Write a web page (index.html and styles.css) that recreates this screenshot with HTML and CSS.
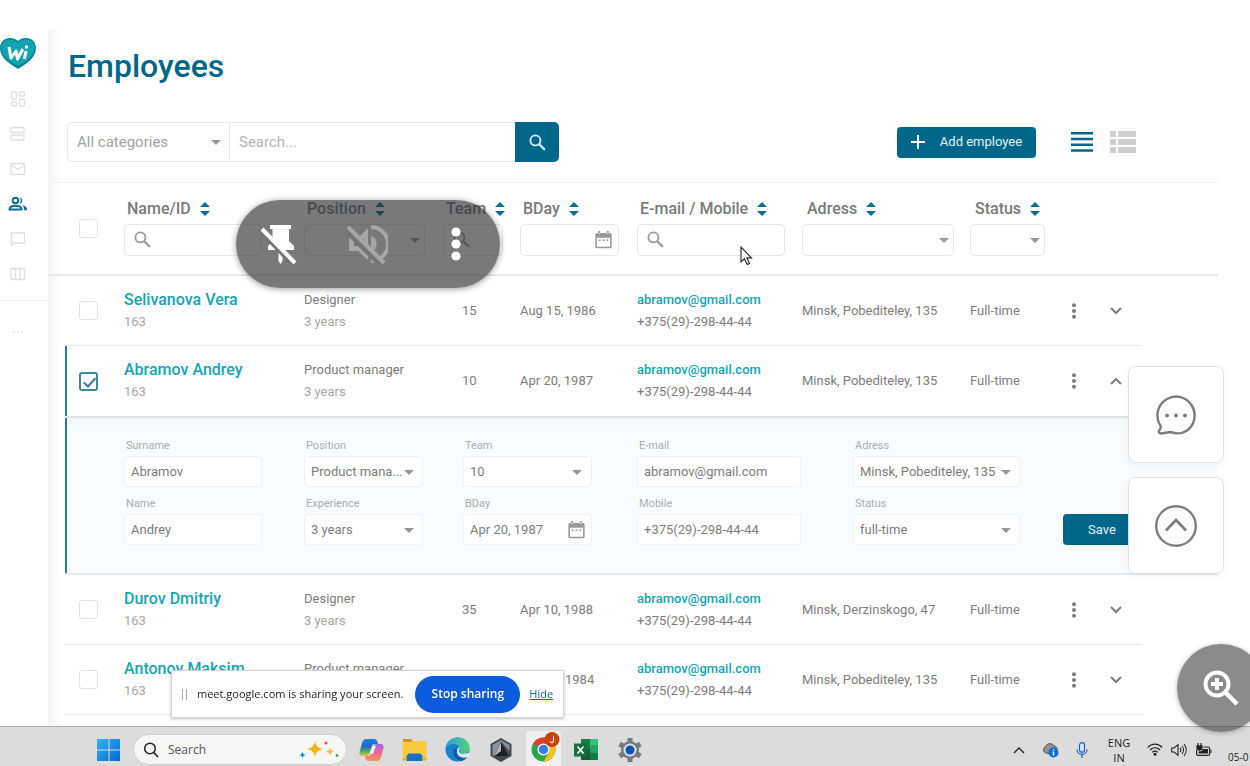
FILE: index.html
```
<!DOCTYPE html>
<html lang="en">
<head>
<meta charset="utf-8">
<title>Employees</title>
<link rel="stylesheet" href="styles.css">
</head>
<body>
<svg class="sprite" aria-hidden="true">
  <symbol id="sort" viewBox="0 0 10 14"><path d="M5 0l5 5H0zM5 14l5-5H0z"/></symbol>
  <symbol id="search" viewBox="0 0 18 18"><circle cx="6.8" cy="6.8" r="5.3" fill="none" stroke="currentColor" stroke-width="2"/><path d="M10.8 10.800l6 6" stroke="currentColor" stroke-width="2.4"/></symbol>
  <symbol id="calendar" viewBox="0 0 18 19"><path d="M2 2h14a1.600 1.600 0 0 1 1.600 1.600v13a1.600 1.600 0 0 1-1.600 1.600H2a1.600 1.600 0 0 1-1.600-1.600v-13A1.600 1.600 0 0 1 2 2zm0 5v9.600h14V7zM3.500 0h2v3h-2zm9 0h2v3h-2zM4 9h2v1.500H4zm4 0h2v1.500H8zm4 0h2v1.500h-2z" fill-rule="evenodd"/></symbol>
  <symbol id="dots" viewBox="0 0 6 16"><circle cx="3" cy="2.200" r="2"/><circle cx="3" cy="8" r="2"/><circle cx="3" cy="13.800" r="2"/></symbol>
  <symbol id="down" viewBox="0 0 12 8"><path d="M1 1l5 5 5-5" fill="none" stroke="currentColor" stroke-width="2"/></symbol>
  <symbol id="up" viewBox="0 0 12 8"><path d="M1 7l5-5 5 5" fill="none" stroke="currentColor" stroke-width="2"/></symbol>
</svg>

<div class="app">
  <nav class="sidebar" aria-label="Main">
    <svg class="logo" viewBox="0 0 36 32"><path d="M18 31C10 26 0 20 0 10 0 4 4.500 0 10 0c3.500 0 6 1 8 3 2-2 4.500-3 8-3 5.500 0 10 4 10 10 0 10-10 16-18 21z" fill="#0a8494"/><path d="M18 28C11 24 1.500 18 1.500 10 1.500 5 5 1.500 10 1.500c3.500 0 6 1.500 8 3.500 2-2 4.500-3.500 8-3.500 5 0 8.500 3.500 8.500 8.500 0 8-9.500 14-16.500 18z" fill="#12a3b2"/><path d="M9 9l2 11 5-7 1.500 8 5.500-10M24.500 21l1.500-8" fill="none" stroke="#fff" stroke-width="3" stroke-linejoin="round"/><circle cx="26.500" cy="9" r="1.700" fill="#fff"/></svg>
    <a href="#" class="nav" aria-label="Dashboard"><svg viewBox="0 0 16 16"><rect x="1.500" y="1" width="5" height="7" rx="1"/><rect x="9.500" y="1" width="5" height="4" rx="1"/><rect x="9.500" y="8" width="5" height="7" rx="1"/><rect x="1.500" y="11" width="5" height="4" rx="1"/></svg></a>
    <a href="#" class="nav" aria-label="Boards"><svg viewBox="0 0 16 16"><rect x="1" y="1.500" width="13" height="5" rx="1"/><rect x="1" y="9" width="13" height="5" rx="1"/></svg></a>
    <a href="#" class="nav" aria-label="Mail"><svg viewBox="0 0 16 16"><rect x="1" y="2.500" width="13.500" height="11" rx="1"/><path d="M1.500 4L8 8.500 14.500 4"/></svg></a>
    <a href="#" class="nav active" aria-label="Employees"><svg viewBox="0 0 20 16"><circle cx="7.500" cy="4.500" r="2.800"/><path d="M1.500 13.500c0-2.500 3-3.700 6-3.700s6 1.200 6 3.700z"/><path d="M11.500 1.200a3.500 3.500 0 0 1 0 6.800 6 6 0 0 0 0-6.800zM14 9.200c3 .4 5 1.800 5 3.800v1.200h-3V13c0-1.500-.8-2.800-2-3.800z" class="solid"/></svg></a>
    <a href="#" class="nav" aria-label="Chat"><svg viewBox="0 0 16 16"><path d="M1.500 2h13v10H4l-2.500 2.500z"/></svg></a>
    <a href="#" class="nav" aria-label="Columns"><svg viewBox="0 0 16 16"><rect x="1" y="2.500" width="13.500" height="11" rx="1"/><path d="M5.500 2.500v11M10 2.500v11"/></svg></a>
    <div class="divider"></div>
    <a href="#" class="nav more" aria-label="More"><svg viewBox="0 0 16 16"><path d="M3 8h2M7 8h2M11 8h2"/></svg></a>
  </nav>

  <main class="main">
    <h1>Employees</h1>
    <div class="toolbar">
      <form class="search">
        <span class="pick"><select aria-label="Category"><option>All categories</option></select></span>
        <input type="text" placeholder="Search..." aria-label="Search">
        <button type="button" aria-label="Search"><svg class="i18"><use href="#search"/></svg></button>
      </form>
      <div class="actions">
        <button type="button" class="btn add"><svg viewBox="0 0 14 14"><path d="M7 0v14M0 7h14" stroke="#fff" stroke-width="2"/></svg>Add employee</button>
        <button type="button" class="view" aria-label="List view"><svg width="22" height="20" viewBox="0 0 22 20"><path d="M0 1.300h22M0 7h22M0 12.800h22M0 18.500h22" stroke="#00678a" stroke-width="2.600"/></svg></button>
        <button type="button" class="view" aria-label="Detail view"><svg width="26" height="22" viewBox="0 0 26 22"><path d="M0 0h6v6H0zM8 0h18v6H8zM0 8h6v6H0zM8 8h18v6H8zM0 16h6v6H0zM8 16h18v6H8z" fill="#cfcfcf"/></svg></button>
      </div>
    </div>

    <table class="grid">
      <colgroup><col class="c-gutter"><col class="c-check"><col class="c-name"><col class="c-pos"><col class="c-team"><col class="c-bday"><col class="c-mail"><col class="c-addr"><col class="c-status"><col class="c-dots"><col class="c-open"><col class="c-tail"></colgroup>
      <thead>
        <tr>
          <td></td>
          <td class="check"><input type="checkbox" aria-label="Select all"></td>
          <th><span class="head">Name/ID <svg><use href="#sort"/></svg></span><span class="filter f-name"><svg class="i18"><use href="#search"/></svg><input type="text" aria-label="Filter name"></span></th>
          <th><span class="head">Position <svg><use href="#sort"/></svg></span><span class="filter pick f-pos"><select aria-label="Filter position"><option></option></select></span></th>
          <th><span class="head">Team <svg><use href="#sort"/></svg></span><span class="filter f-team"><svg class="i18"><use href="#search"/></svg><input type="text" aria-label="Filter team"></span></th>
          <th><span class="head">BDay <svg><use href="#sort"/></svg></span><span class="filter f-bday"><input type="text" aria-label="Filter birthday"><svg class="cal"><use href="#calendar"/></svg></span></th>
          <th><span class="head">E-mail / Mobile <svg><use href="#sort"/></svg></span><span class="filter f-mail"><svg class="i18"><use href="#search"/></svg><input type="text" aria-label="Filter contact"></span></th>
          <th><span class="head late">Adress <svg><use href="#sort"/></svg></span><span class="filter pick f-addr"><select aria-label="Filter address"><option></option></select></span></th>
          <th><span class="head late">Status <svg><use href="#sort"/></svg></span><span class="filter pick f-status"><select aria-label="Filter status"><option></option></select></span></th>
          <td></td><td></td><td></td>
        </tr>
      </thead>
      <tbody>
        <tr class="row">
          <td></td>
          <td class="check"><input type="checkbox" aria-label="Select Selivanova Vera"></td>
          <td><a href="#" class="name">Selivanova Vera</a><span class="sub">163</span></td>
          <td><span class="line">Designer</span><span class="sub">3 years</span></td>
          <td class="team">15</td><td>Aug 15, 1986</td>
          <td><a href="#" class="mail">abramov@gmail.com</a><span class="line">+375(29)-298-44-44</span></td>
          <td>Minsk, Pobediteley, 135</td><td>Full-time</td>
          <td><button type="button" class="icon" aria-label="Actions"><svg class="kebab"><use href="#dots"/></svg></button></td>
          <td><button type="button" class="icon" aria-label="Expand"><svg class="chev"><use href="#down"/></svg></button></td>
          <td></td>
        </tr>
        <tr class="row open">
          <td></td>
          <td class="check"><input type="checkbox" checked aria-label="Select Abramov Andrey"></td>
          <td><a href="#" class="name">Abramov Andrey</a><span class="sub">163</span></td>
          <td><span class="line">Product manager</span><span class="sub">3 years</span></td>
          <td class="team">10</td><td>Apr 20, 1987</td>
          <td><a href="#" class="mail">abramov@gmail.com</a><span class="line">+375(29)-298-44-44</span></td>
          <td>Minsk, Pobediteley, 135</td><td>Full-time</td>
          <td><button type="button" class="icon" aria-label="Actions"><svg class="kebab"><use href="#dots"/></svg></button></td>
          <td><button type="button" class="icon" aria-label="Collapse"><svg class="chev"><use href="#up"/></svg></button></td>
          <td></td>
        </tr>
        <tr class="edit">
          <td></td>
          <td colspan="11" class="panel">
            <form class="fields">
              <div class="field w-name"><label for="surname">Surname</label><span class="box"><input id="surname" type="text" value="Abramov"></span></div>
              <div class="field w-pos"><label for="position">Position</label><span class="box pick"><select id="position"><option>Product mana...</option></select></span></div>
              <div class="field w-team"><label for="team">Team</label><span class="box pick wide"><select id="team"><option>10</option></select></span></div>
              <div class="field w-mail"><label for="email">E-mail</label><span class="box"><input id="email" type="text" value="abramov@gmail.com"></span></div>
              <div class="field w-addr"><label for="address">Adress</label><span class="box pick"><select id="address"><option>Minsk, Pobediteley, 135</option></select></span></div>
              <span></span>
              <div class="field w-name"><label for="name">Name</label><span class="box"><input id="name" type="text" value="Andrey"></span></div>
              <div class="field w-pos"><label for="experience">Experience</label><span class="box pick"><select id="experience"><option>3 years</option></select></span></div>
              <div class="field w-team"><label for="bday">BDay</label><span class="box"><input id="bday" type="text" value="Apr 20, 1987"><svg class="cal"><use href="#calendar"/></svg></span></div>
              <div class="field w-mail"><label for="mobile">Mobile</label><span class="box"><input id="mobile" type="text" value="+375(29)-298-44-44"></span></div>
              <div class="field w-addr"><label for="status">Status</label><span class="box pick"><select id="status"><option>full-time</option></select></span></div>
              <button type="button" class="btn save">Save</button>
            </form>
          </td>
        </tr>
        <tr class="row">
          <td></td>
          <td class="check"><input type="checkbox" aria-label="Select Durov Dmitriy"></td>
          <td><a href="#" class="name">Durov Dmitriy</a><span class="sub">163</span></td>
          <td><span class="line">Designer</span><span class="sub">3 years</span></td>
          <td class="team">35</td><td>Apr 10, 1988</td>
          <td><a href="#" class="mail">abramov@gmail.com</a><span class="line">+375(29)-298-44-44</span></td>
          <td>Minsk, Derzinskogo, 47</td><td>Full-time</td>
          <td><button type="button" class="icon" aria-label="Actions"><svg class="kebab"><use href="#dots"/></svg></button></td>
          <td><button type="button" class="icon" aria-label="Expand"><svg class="chev"><use href="#down"/></svg></button></td>
          <td></td>
        </tr>
        <tr class="row">
          <td></td>
          <td class="check"><input type="checkbox" aria-label="Select Antonov Maksim"></td>
          <td><a href="#" class="name">Antonov Maksim</a><span class="sub">163</span></td>
          <td><span class="line">Product manager</span><span class="sub">&nbsp;</span></td>
          <td></td><td class="year">1984</td>
          <td><a href="#" class="mail">abramov@gmail.com</a><span class="line">+375(29)-298-44-44</span></td>
          <td>Minsk, Pobediteley, 135</td><td>Full-time</td>
          <td><button type="button" class="icon" aria-label="Actions"><svg class="kebab"><use href="#dots"/></svg></button></td>
          <td><button type="button" class="icon" aria-label="Expand"><svg class="chev"><use href="#down"/></svg></button></td>
          <td></td>
        </tr>
      </tbody>
    </table>
  </main>
</div>

<footer class="taskbar">
  <div class="apps">
    <button type="button" class="start" aria-label="Start"><svg width="24" height="24" viewBox="0 0 24 24"><defs><linearGradient id="win" x2="1" y2="1"><stop stop-color="#2fb4f5"/><stop offset="1" stop-color="#0767c8"/></linearGradient></defs><path d="M0 1h11.500v10.500H0zM12.500 1H23v10.500H12.500zM0 12.500h11.500V23H0zM12.500 12.500H23V23H12.500z" fill="url(#win)"/></svg></button>
    <label class="find"><svg width="16" height="16" viewBox="0 0 16 16"><circle cx="7" cy="6.500" r="5.300" fill="none" stroke="#222" stroke-width="1.500"/><path d="M10.800 10.500l4.200 4.500" stroke="#222" stroke-width="1.800"/></svg><input type="text" placeholder="Search"><svg width="40" height="20" viewBox="0 0 40 20"><path d="M16 1c1 5 3 7 8 8-5 1-7 3-8 8-1-5-3-7-8-8 5-1 7-3 8-8z" fill="#f9b517"/><path d="M31 7c.6 3 1.500 4 4.500 4.500-3 .6-4 1.500-4.500 4.500-.6-3-1.500-4-4.500-4.500 3-.5 4-1.500 4.500-4.500z" fill="#f5b942"/><path d="M3.500 12l1 2 2 1-2 1-1 2-1-2-2-1 2-1z" fill="#1686d9"/><circle cx="27" cy="3" r="1.600" fill="#d8604a"/><circle cx="38" cy="15.500" r="1.400" fill="#55a545"/></svg></label>
    <button type="button" class="task" aria-label="Copilot"><svg width="25" height="24" viewBox="0 0 25 24"><defs><linearGradient id="cpa" x2="0" y2="1"><stop stop-color="#1587dc"/><stop offset=".45" stop-color="#2466c9"/><stop offset=".75" stop-color="#53b45c"/><stop offset="1" stop-color="#f0c32c"/></linearGradient><linearGradient id="cpb" x2="0" y2="1"><stop stop-color="#a063e8"/><stop offset=".5" stop-color="#f0629a"/><stop offset="1" stop-color="#f99a45"/></linearGradient></defs><path d="M7 1h8c2 0 3 1 3.500 3L19 6h-3c-2 0-3 1-3.500 3l-2 6c-.5 2-1.500 3-3.500 3H3c-2 0-3-2-2.500-4l2.500-9c.7-2.500 2-4 4-4z" fill="url(#cpa)"/><path d="M18 23h-8c-2 0-3-1-3.500-3L6 18h3c2 0 3-1 3.500-3l2-6c.5-2 1.500-3 3.500-3h4c2 0 3 2 2.500 4L22 19c-.7 2.500-2 4-4 4z" fill="url(#cpb)"/><path d="M11 16l3-8h3l-3 8z" fill="#e8eef4"/></svg></button>
    <button type="button" class="task" aria-label="Files"><svg width="25" height="23" viewBox="0 0 25 23"><path d="M1 1h8l2 3h-10z" fill="#d9940b"/><path d="M.500 4.500h9L11 3h12.500l1 1v18H.500z" fill="#fbc940"/><path d="M4.500 23v-5l2-2.500h12l2 2.500v5z" fill="#1472c4"/><path d="M.500 20h4v2.500h-4zM20.500 20h4v2.500h-4z" fill="#efad22"/></svg></button>
    <button type="button" class="task run" aria-label="Edge"><svg width="25" height="25" viewBox="0 0 25 25"><defs><linearGradient id="ed" x2="1"><stop stop-color="#24a5e0"/><stop offset="1" stop-color="#56cf72"/></linearGradient></defs><circle cx="12.500" cy="12.500" r="12" fill="#1a80cb"/><path d="M.700 11C2 4 7 .500 13 .500c7 0 11.500 5 11.500 10.500 0 4-3 6-6.500 6-2.500 0-4-1-4-2 0-.7 1-1 1-3 0-2.500-2.500-5-6.500-5-3.500 0-6 1.500-7.800 4z" fill="url(#ed)"/><path d="M9 11c-2 5 0 11 7 13 3-.5 5-2 7-5-5 2-12 0-11-7z" fill="#1259a8"/><path d="M14.500 10c.8 2-1 3-.6 5 .8 2 4 2.500 7 1.500l3.600-.5c0 2-.5 3-1.500 4-5 2-11.500 0-11-6 .2-2 1.200-3.500 2.500-4z" fill="#dceaf1"/></svg></button>
    <button type="button" class="task" aria-label="Workspace"><svg width="22" height="24" viewBox="0 0 22 24"><path d="M11 0l10.500 6v12L11 24 .500 18V6z" fill="#44494e"/><path d="M11 2l8.500 5v6L11 3.500 5 17 2.500 18V7z" fill="#8b9298"/><path d="M11 4l7.500 14H4.500z" fill="#1d2023"/><path d="M11 4v9l-6.500 5z" fill="#b4babf"/></svg></button>
    <button type="button" class="task run current" aria-label="Chrome"><svg width="29" height="30" viewBox="0 0 29 30"><circle cx="12.500" cy="17.500" r="12" fill="#2da44e"/><path d="M12.500 17.500L2.100 11.500A12 12 0 0 1 22.900 11.500z" fill="#e33b2e"/><path d="M12.500 12h10.600A12 12 0 0 1 12.500 29.500l5.500-9z" fill="#fbc116"/><circle cx="12.500" cy="17.500" r="6" fill="#fff"/><circle cx="12.500" cy="17.500" r="4.700" fill="#327be8"/><circle cx="21" cy="7.500" r="7.500" fill="#c8440f"/><path d="M22.500 4.200v5c0 2-3 2-3.200.2" fill="none" stroke="#fff" stroke-width="1.100"/></svg></button>
    <button type="button" class="task run" aria-label="Excel"><svg width="25" height="23" viewBox="0 0 25 23"><path d="M7 1h17v21H7z" fill="#21a366"/><path d="M7 1h9v10H7z" fill="#148048"/><path d="M16 1h8v6h-8z" fill="#33c481"/><path d="M7 11h9v11H7z" fill="#185c37"/><path d="M16 15h8v7h-8z" fill="#107c41"/><path d="M0 5.500h13v13H0z" fill="#10733d"/><path d="M3.500 8.500l6 7M9.500 8.500l-6 7" stroke="#fff" stroke-width="1.800"/></svg></button>
    <button type="button" class="task run" aria-label="Settings"><svg width="24" height="24" viewBox="0 0 24 24"><circle cx="12" cy="12" r="9" fill="#747a80"/><path d="M12 0v24M1.600 6l20.800 12M1.600 18L22.400 6" stroke="#747a80" stroke-width="5"/><circle cx="12" cy="12" r="6.500" fill="#dce3e8"/><circle cx="12" cy="12" r="4.500" fill="#0b57b0"/></svg></button>
  </div>
  <div class="tray">
    <svg width="12" height="8" viewBox="0 0 12 8"><path d="M1 7l5-5 5 5" fill="none" stroke="#222" stroke-width="1.400"/></svg>
    <svg width="17" height="16" viewBox="0 0 17 16"><path d="M4 11a3.500 3.500 0 0 1-.5-6.500C5 1 10 .500 12 4c2 0 3.500 2 3 4l-5 4z" fill="#8f9192" stroke="#555" stroke-width="1"/><circle cx="11.500" cy="10.500" r="5" fill="#0a6ed1"/><path d="M11.500 9.500v4M11.500 7.300v1.200" stroke="#fff" stroke-width="1.500"/></svg>
    <svg width="12" height="16" viewBox="0 0 12 16"><rect x="3.500" y=".700" width="5" height="9.500" rx="2.500" fill="#d7e8fa" stroke="#1a5fb8" stroke-width="1.200"/><path d="M1 7.500c0 6.500 10 6.500 10 0M6 12.300V16" fill="none" stroke="#1a5fb8" stroke-width="1.200"/></svg>
    <span class="lang">ENG<br>IN</span>
    <svg width="16" height="13" viewBox="0 0 16 13"><path d="M.800 4.500c4-4.500 10.400-4.500 14.400 0M3 7c3-3 7-3 10 0M5.200 9.300c1.600-1.600 4-1.600 5.600 0" fill="none" stroke="#222" stroke-width="1.200"/><circle cx="8" cy="11.300" r="1.500" fill="#222"/></svg>
    <svg width="16" height="14" viewBox="0 0 16 14"><path d="M.700 5v4h2.500L7 12.300V1.700L3.200 5z" fill="none" stroke="#222" stroke-width="1.100"/><path d="M9 4.800c1 1.200 1 3.200 0 4.400M11 3c2 2.300 2 5.700 0 8M13 1.200c3 3.500 3 8.100 0 11.600" fill="none" stroke="#222" stroke-width="1.100"/></svg>
    <svg width="17" height="14" viewBox="0 0 17 14"><rect x="1.600" y="4" width="13" height="8.400" rx="1.500" fill="none" stroke="#222" stroke-width="1.200"/><path d="M3.500 6h9.500v4.500H3.500zM15.500 6.500h1v3.500h-1z" fill="#222"/><path d="M1 2h7v3c0 2-1.500 3-3.500 3S1 7 1 5z" fill="#222" stroke="#dcdcdc" stroke-width=".8"/><path d="M3 0v3M6 0v3" stroke="#222" stroke-width="1.200"/></svg>
    <span class="date">05-0</span>
  </div>
</footer>

<div class="pill">
  <button type="button" aria-label="Unpin"><svg width="38" height="42" viewBox="0 0 38 42"><path d="M10 2h21v4h-2v12l5 5v4H22.500v11L20.500 41 18.500 38V27H8v-4l4.500-5V6H10z" fill="#fff"/><path d="M1 9l33 34" stroke="#737476" stroke-width="4"/><path d="M2 6l33 34" stroke="#fff" stroke-width="4"/></svg></button>
  <button type="button" class="mute" aria-label="Mute"><svg width="42" height="42" viewBox="0 0 42 42"><path d="M3 15h9L22 5v32L12 28H3z" fill="#a5a6a7"/><path d="M8 19h6l4-4v12l-4-4H8z" fill="#737476"/><path d="M25 4a17 17 0 0 1 0 34" fill="none" stroke="#a5a6a7" stroke-width="4"/><path d="M25 13a8.500 8.500 0 0 1 0 16z" fill="#a5a6a7"/><path d="M1 7l34 34" stroke="#737476" stroke-width="7"/><path d="M2 4l36 36" stroke="#a5a6a7" stroke-width="4"/></svg></button>
  <button type="button" aria-label="More options"><svg width="10" height="34" viewBox="0 0 10 34"><g fill="#fff"><circle cx="5" cy="5" r="4.600"/><circle cx="5" cy="17" r="4.600"/><circle cx="5" cy="29" r="4.600"/></g></svg></button>
</div>

<div class="floaters">
  <button type="button" aria-label="Comments"><svg width="42" height="42" viewBox="0 0 42 42"><path d="M4.500 30C0 21 3 10 12 5c9-5 19-2 24.500 6S40 31 32 36.500c-5 3.500-11 3.500-16.500 1.500L6 39.500c-1.500 0-2.500-1-2-2.500L6 33z" fill="none" stroke="#7d7d7d" stroke-width="2.400" stroke-linejoin="round"/><g fill="#7d7d7d"><circle cx="12" cy="21.500" r="1.900"/><circle cx="21" cy="21.500" r="1.900"/><circle cx="30" cy="21.500" r="1.900"/></g></svg></button>
  <button type="button" aria-label="Back to top"><svg width="44" height="42" viewBox="0 0 44 42"><circle cx="22" cy="21" r="19.800" fill="none" stroke="#7d7d7d" stroke-width="2.400"/><path d="M12 25.500L22 15l10 10.500" fill="none" stroke="#7d7d7d" stroke-width="2.600"/></svg></button>
</div>

<button type="button" class="zoom" aria-label="Zoom in"><svg width="36" height="36" viewBox="0 0 36 36"><circle cx="14" cy="14" r="11.500" fill="none" stroke="#fff" stroke-width="4"/><path d="M14 8v12M8 14h12" stroke="#fff" stroke-width="4"/><path d="M22 22l12 12" stroke="#fff" stroke-width="4.500"/></svg></button>

<div class="share">
  <span class="grip"></span>
  <span>meet.google.com is sharing your screen.</span>
  <button type="button">Stop sharing</button>
  <a href="#">Hide</a>
</div>

<svg class="cursor" width="13" height="20" viewBox="0 0 13 20" aria-hidden="true"><path d="M1 1v15l3.500-3.300 2.700 5.800 2.300-1-2.600-5.600H11.500z" fill="#fff" stroke="#222" stroke-width="1.100"/></svg>
</body>
</html>
```
FILE: styles.css
```
* { box-sizing: border-box; }
body { margin: 0; height: 100vh; overflow: hidden; display: flex; flex-direction: column; background: #fff; font: 13px/22px Roboto, sans-serif; color: #7d7d7d; }
button, input, select { font: inherit; color: inherit; margin: 0; padding: 0; border: 0; background: none; }
select { appearance: none; width: 100%; height: 100%; }
input { min-width: 0; }
a { color: inherit; text-decoration: none; }
svg { display: block; flex: none; fill: currentColor; }
.sprite { position: absolute; width: 0; height: 0; }

.app { flex: 1; min-height: 0; display: flex; padding-top: 29px; overflow: hidden; }
.sidebar { width: 48px; flex: none; display: flex; flex-direction: column; padding-top: 9px; }
.logo { width: 36px; height: 32px; margin-bottom: 11px; }
.nav { display: flex; align-items: center; justify-content: center; width: 36px; height: 35px; color: #dedede; }
.nav svg { width: 16px; height: 16px; fill: none; stroke: currentColor; stroke-width: 1.3; }
.nav.active { color: #0a6f90; }
.nav.active svg { width: 20px; height: 16px; stroke-width: 2; }
.nav .solid { fill: currentColor; stroke: none; }
.divider { height: 1px; margin: 9px 0 13px; background: #efefef; }

.main { flex: 1; min-width: 0; padding-right: 32px; background: linear-gradient(90deg, #f4f4f4, #fff 14px); }
h1 { margin: 0; padding: 17px 0 0 20px; font-size: 32px; line-height: 40px; font-weight: 500; color: #00678a; }
.toolbar { display: flex; align-items: center; justify-content: space-between; padding: 36px 82px 20px 19px; border-bottom: 1px solid #f1f1f1; }
.search { display: flex; height: 40px; width: 492px; font-size: 15px; color: #a3a3a3; }
.search .pick { width: 163px; border: 1px solid #e6e6e6; border-radius: 5px 0 0 5px; }
.search select { padding-left: 9px; }
.search input { flex: 1; padding-left: 9px; border: solid #e6e6e6; border-width: 1px 0; }
.search input::placeholder { color: #b4b4b4; }
.search button { width: 44px; border-radius: 0 5px 5px 0; background: #00678a; color: #d5ecf4; display: flex; align-items: center; justify-content: center; }
.pick { position: relative; }
.pick::after { content: ""; position: absolute; right: 8px; top: 50%; margin-top: -2px; border: solid transparent; border-width: 5px 5px 0; border-top-color: #979797; pointer-events: none; }
.i18 { width: 17px; height: 17px; }
.actions { display: flex; align-items: center; }
.btn { height: 31px; border-radius: 4px; background: #00678a; color: #e3f2f7; display: flex; align-items: center; justify-content: center; }
.add { width: 139px; gap: 15px; margin-right: 35px; }
.add svg { width: 14px; height: 14px; }
.view + .view { margin-left: 17px; }

.grid { width: 100%; table-layout: fixed; border-collapse: separate; border-spacing: 0; }
.c-gutter { width: 17px; } .c-check { width: 59px; } .c-name { width: 180px; } .c-pos { width: 139px; } .c-team { width: 77px; } .c-bday { width: 117px; } .c-mail { width: 165px; } .c-status { width: 98px; } .c-dots { width: 42px; } .c-open { width: 32px; } .c-tail { width: 76px; }
.grid td, .grid th { padding: 0; text-align: left; white-space: nowrap; }
.grid thead td, .grid thead th { height: 93px; border-bottom: 2px solid #e9e9e9; }
.head { display: flex; align-items: center; gap: 9px; height: 20px; margin: -3px 0 5px 3px; font-size: 16px; font-weight: 500; color: #7a7a7a; }
.head.late { margin-left: 5px; }
.head svg { width: 10px; height: 14px; color: #0a6f90; }
.filter { display: flex; align-items: center; height: 32px; border: 1px solid #e6e6e6; border-radius: 5px; color: #9d9d9d; }
.filter > .i18 { margin-left: 9px; }
.filter input { flex: 1; width: 0; }
.cal { width: 17px; height: 18px; margin-right: 6px; color: #979797; }
.filter.pick::after { right: 4px; }
.f-name { width: 138px; } .f-pos { width: 121px; } .f-team { width: 60px; } .f-bday { width: 99px; } .f-mail { width: 148px; } .f-addr { width: 152px; } .f-status { width: 75px; }
.grid .check { padding-left: 14px; }
.check input { display: block; appearance: none; position: relative; width: 19px; height: 19px; border: 1px solid #e2e2e2; border-radius: 3px; }
.check input:checked { border: 2px solid #3f86a0; }
.check input:checked::after { content: ""; position: absolute; left: 5px; top: 1px; width: 5px; height: 10px; border: solid #2f7c98; border-width: 0 2px 2px 0; rotate: 42deg; }
.row td { height: 70px; border-bottom: 1px solid #e9e9e9; }
.row td:first-child, .row td:last-child { border-bottom: 0; }
.row.open td { height: 72px; }
.row.open td:not(:first-child) { border-bottom: 2px solid #dfe1e2; }
.open .check, .panel { box-shadow: inset 2px 0 #2a7d99; }
.row a, .row .line, .row .sub { display: block; }
.sub { color: #a6a6a6; }
.name { font-size: 16px; font-weight: 500; color: #14a5b3; }
.mail { font-weight: 500; color: #14a5b3; }
.grid .team { padding-left: 19px; }
.grid .year { padding-left: 45px; }
.icon { display: flex; align-items: center; }
.kebab { width: 6px; height: 16px; margin-left: 3px; }
.chev { width: 12px; height: 8px; }

.grid .panel { height: 156px; padding: 20px 0 28px 59px; background: linear-gradient(#f3f8fa, #f8fcfe 12px); border-bottom: 2px solid #e6e9ea; }
.fields { display: grid; grid-template-columns: 180px 159px 174px 216px 1fr 155px; row-gap: 9px; align-items: end; }
.field label { display: block; padding: 0 2px 2px; font-size: 11px; line-height: 16px; color: #a9adae; }
.w-name { width: 138px; } .w-pos { width: 119px; } .w-team { width: 129px; } .w-mail { width: 164px; } .w-addr { width: 167px; }
.box { display: flex; align-items: center; height: 31px; border: 1px solid #eff2f3; border-radius: 4px; background: #fff; }
.box input { flex: 1; width: 0; padding-left: 6px; }
.box select { padding-left: 6px; }
.box.wide::after { right: 9px; }
.save { width: 78px; }

.taskbar { flex: none; height: 40px; overflow: hidden; display: flex; justify-content: space-between; align-items: flex-start; background: #dcdcdc; border-top: 1px solid #adadad; padding-left: 97px; font-family: "Open Sans", "Noto Sans", sans-serif; font-size: 12px; color: #222; }
.apps, .tray { display: flex; align-items: center; height: 45px; }
.start { margin-right: 12px; }
.find { display: flex; align-items: center; width: 214px; height: 31px; margin-right: 7px; padding: 0 7px 0 9px; border: 1px solid #cfcfcf; border-radius: 16px; background: #f6f6f6; }
.find input { flex: 1; width: 0; padding-left: 9px; font-size: 12px; }
.find input::placeholder { color: #555; }
.task { display: flex; align-items: center; justify-content: center; position: relative; width: 35px; height: 38px; margin-right: 8px; border-radius: 4px; }
.run::after { content: ""; position: absolute; left: 15px; top: 35px; width: 6px; height: 3px; border-radius: 2px; background: #808080; }
.current { background: #efefef; }
.current svg { margin: -6px 0 0 3px; }
.current::after { left: 11px; width: 15px; background: #1572c8; }
.lang { width: 28px; margin-right: 6px; line-height: 15px; text-align: center; font-size: 11px; }
.tray { gap: 8px; }
.tray svg:nth-child(-n+3) { margin-right: 9px; }
.date { flex: none; width: 22px; padding-top: 14px; margin-left: 8px; font-size: 10px; line-height: 16px; white-space: nowrap; }

.pill { position: fixed; left: 236px; top: 200px; width: 264px; height: 88px; border-radius: 44px; background: rgba(44, 45, 48, .64); box-shadow: 0 1px 6px rgba(0, 0, 0, .4); display: flex; align-items: center; justify-content: space-between; padding: 0 39px 0 24px; }
.mute { padding-right: 16px; }
.floaters { position: fixed; right: 26px; top: 366px; display: grid; gap: 14px; }
.floaters button { width: 96px; height: 97px; border: 1px solid #e2e2e2; border-radius: 8px; background: #fff; box-shadow: 0 2px 8px rgba(0, 0, 0, .05); display: flex; align-items: center; justify-content: center; }
.zoom { position: fixed; right: -15px; bottom: 34px; width: 88px; height: 88px; border-radius: 50%; background: rgba(60, 61, 63, .6); box-shadow: 0 1px 5px rgba(0, 0, 0, .3); display: flex; align-items: center; justify-content: center; }
.share { position: fixed; left: 171px; bottom: 48px; height: 48px; display: flex; align-items: center; padding: 0 10px; background: #fff; border: 1px solid #d4d4d4; box-shadow: 0 1px 3px rgba(0, 0, 0, .25); font: 11px/16px "Open Sans", "Noto Sans", sans-serif; color: #222; white-space: nowrap; }
.grip { width: 5px; height: 11px; margin-right: 10px; border: solid #aaa; border-width: 0 1px; }
.share button { width: 105px; height: 37px; margin: 0 9px 0 12px; border-radius: 19px; background: #0b5bdc; color: #fff; font-size: 12px; font-weight: 600; }
.share a { color: #1a5fc4; text-decoration: underline; }
.cursor { position: fixed; left: 740px; top: 246px; }
```
